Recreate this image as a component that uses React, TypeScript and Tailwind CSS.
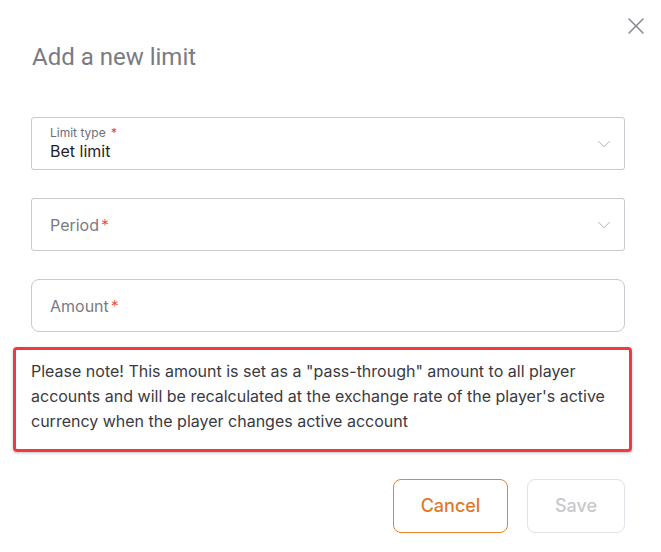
import { X, ChevronDown } from "lucide-react";

export default function App() {
  return (
    <div className="relative h-[552px] w-[661px] bg-white font-['Inter',sans-serif]">
      <button className="absolute right-[11px] top-[12px] text-[#8a8a92]">
        <X size={28} strokeWidth={1.3} />
      </button>

      <h2 className="pl-[32px] pt-[42px] font-['Roboto',sans-serif] text-[24px] leading-[30px] text-[#7a7a84]">
        Add a new limit
      </h2>

      <div className="mt-[45px] flex flex-col gap-[28px] pl-[31px] pr-[36px]">
        <div className="flex h-[53px] items-center justify-between rounded-[3px] border border-[#c9c9d1] pl-[18px] pr-[9px]">
          <div className="flex flex-col">
            <span className="text-[12px] leading-[14px] text-[#6e6e78]">
              Limit type <span className="ml-[2px] text-[#e53935]">*</span>
            </span>
            <span className="text-[16px] leading-[22px] text-[#1f1f24]">Bet limit</span>
          </div>
          <ChevronDown size={22} strokeWidth={1} className="text-[#a8a8b0]" />
        </div>

        <div className="flex h-[53px] items-center justify-between rounded-[3px] border border-[#c9c9d1] pl-[18px] pr-[9px]">
          <span className="text-[16px] text-[#7a7a84]">
            Period<span className="ml-[2px] font-light text-[#e53935]">*</span>
          </span>
          <ChevronDown size={22} strokeWidth={1} className="text-[#a8a8b0]" />
        </div>

        <div className="flex h-[53px] items-center rounded-[8px] border border-[#c9c9d1] pl-[18px]">
          <span className="text-[16px] text-[#7a7a84]">
            Amount<span className="ml-[2px] font-light text-[#e53935]">*</span>
          </span>
        </div>
      </div>

      <div className="ml-[13px] mr-[29px] mt-[15px] rounded-[4px] border-[3px] border-[#ee3b43] px-[15px] pb-[15px] pt-[9px] shadow-[0_1px_3px_rgba(0,0,0,0.25)]">
        <p className="text-[16px] leading-[25px] text-[#3a3a42]">
          Please note! This amount is set as a "pass-through" amount to all player accounts and
          will be recalculated at the exchange rate of the player's active currency when the
          player changes active account
        </p>
      </div>

      <div className="mt-[27px] flex justify-end gap-[19px] pr-[36px]">
        <button className="h-[54px] w-[115px] rounded-[8px] border border-[#e8842c] text-[18px] font-medium leading-[52px] text-[#e0782a]">
          Cancel
        </button>
        <button className="h-[54px] w-[98px] rounded-[8px] border border-[#e2e2e8] text-[18px] font-medium leading-[52px] text-[#c8c8cc]">
          Save
        </button>
      </div>
    </div>
  );
}
